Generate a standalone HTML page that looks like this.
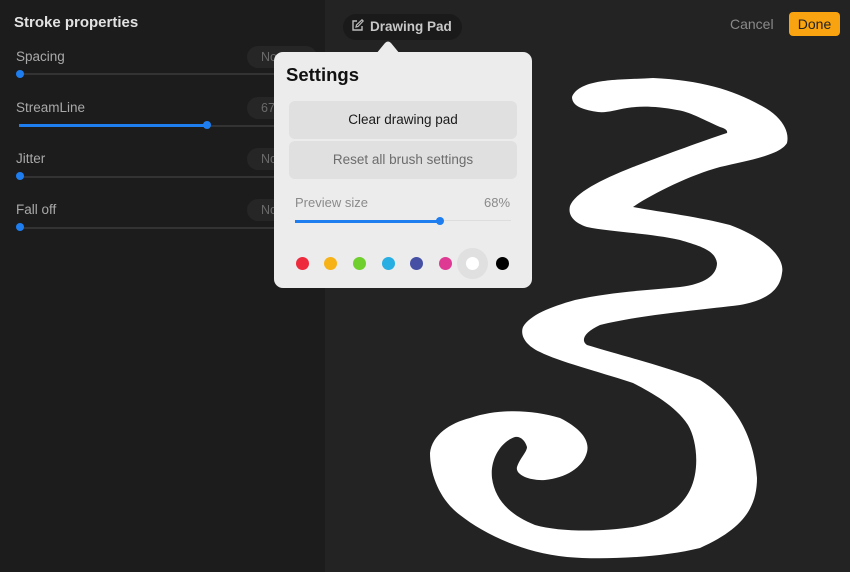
<!DOCTYPE html>
<html><head><meta charset="utf-8"><style>
*{margin:0;padding:0;box-sizing:border-box}
body{width:850px;height:572px;overflow:hidden;background:#232323;font-family:"Liberation Sans",sans-serif;position:relative}
.left{position:absolute;left:0;top:0;width:325px;height:572px;background:#1c1c1c}
.t{position:absolute;color:#e6e6e6}
.lab{position:absolute;left:16px;color:#a9a9a9;font-size:13.5px}
.pill{position:absolute;left:247px;width:70px;height:22px;border-radius:11px;background:#262626;color:#6a6a6a;font-size:12.5px;padding:4px 0 0 14px}
.track{position:absolute;left:19px;width:300px;height:2px;background:#333}
.fill{position:absolute;left:19px;height:3px;background:#1e7ef0}
.knob{position:absolute;width:8px;height:8px;border-radius:50%;background:#1e7ef0}
.pop{position:absolute;left:274px;top:52px;width:258px;height:236px;background:#ececec;border-radius:9px}
.btn{position:absolute;left:15px;width:228px;height:38px;border-radius:6px;background:#e0e0e0;text-align:center;font-size:13.5px;padding-top:11px}
.dot{position:absolute;top:205px;width:13px;height:13px;border-radius:50%}
</style></head><body>
<div class="left">
<div class="t" style="left:14px;top:14px;font-size:15px;font-weight:bold;color:#e2e2e2">Stroke properties</div>
<div class="lab" style="top:49px">Spacing</div><div class="pill" style="top:46px">None</div>
<div class="track" style="top:73px"></div><div class="knob" style="left:16px;top:70px"></div>
<div class="lab" style="top:100px">StreamLine</div><div class="pill" style="top:97px">67%</div>
<div class="track" style="top:125px"></div><div class="fill" style="top:124px;width:188px"></div><div class="knob" style="left:203px;top:121px"></div>
<div class="lab" style="top:151px">Jitter</div><div class="pill" style="top:148px">None</div>
<div class="track" style="top:176px"></div><div class="knob" style="left:16px;top:172px"></div>
<div class="lab" style="top:202px">Fall off</div><div class="pill" style="top:199px">None</div>
<div class="track" style="top:227px"></div><div class="knob" style="left:16px;top:223px"></div>
</div>
<svg style="position:absolute;left:0;top:0" width="850" height="572">
<path fill="#fff" d="M572,97 C580,78 620,80 653,78 C700,80 733,90 760,105 C780,115 790,130 787,143 C780,155 750,160 720,167 C690,175 650,195 633,207 C660,212 700,217 730,225 C770,240 785,260 782,273 C780,290 767,300 740,305 C700,310 640,315 600,325 C585,332 580,340 587,345 C620,355 667,367 700,380 C740,405 755,443 757,478 C757,510 740,530 700,548 C660,558 600,560 567,557 C520,552 483,533 460,515 C440,500 430,475 430,453 C432,435 450,423 470,418 C500,408 533,410 560,418 C580,428 590,440 587,452 C583,468 565,478 545,480 C530,481 515,475 517,467 C520,458 527,452 527,447 C525,440 520,436 515,437 C500,442 490,460 492,478 C495,500 510,515 535,525 C560,532 600,532 633,527 C660,522 680,510 690,490 C700,470 697,440 688,425 C675,405 650,392 633,383 C600,372 560,362 540,352 C525,345 520,335 523,327 C530,315 550,307 575,300 C610,292 650,290 680,287 C705,284 717,275 717,263 C715,250 700,246 680,240 C650,233 610,232 587,227 C572,222 568,214 570,206 C575,193 600,180 633,167 C670,153 700,142 727,133 C728,130 724,128 720,127 C700,118 690,112 677,110 C655,106 640,106 627,108 C615,110 607,113 598,112 C585,110 572,107 572,97 Z"/>
</svg>
<div style="position:absolute;left:343px;top:14px;width:119px;height:26px;border-radius:13px;background:#1a1a1a"></div>
<svg style="position:absolute;left:351px;top:19px" width="13" height="13" viewBox="0 0 13 13"><path d="M6,2 H2 V11 H11 V7" fill="none" stroke="#bbb" stroke-width="1.4"/><path d="M5,8 L5.5,6 L11,0.8 L12.2,2 L7,7.5 Z" fill="none" stroke="#bbb" stroke-width="1.2"/></svg>
<div class="t" style="left:370px;top:19px;font-size:13.5px;font-weight:bold;color:#c8c8c8">Drawing Pad</div>
<div class="t" style="left:730px;top:16px;font-size:14px;color:#8a8a8a">Cancel</div>
<div style="position:absolute;left:789px;top:12px;width:51px;height:24px;border-radius:4px;background:#f8a30f;color:#222;font-size:14px;text-align:center;padding-top:4px">Done</div>
<svg style="position:absolute;left:376px;top:40px" width="24" height="14"><path d="M0,14 L9,3 Q12,0 15,3 L24,14 Z" fill="#ececec"/></svg>
<div class="pop">
<div style="position:absolute;left:12px;top:12px;font-size:18.5px;font-weight:bold;color:#111">Settings</div>
<div class="btn" style="top:49px;color:#1a1a1a">Clear drawing pad</div>
<div class="btn" style="top:89px;color:#6c6c6c">Reset all brush settings</div>
<div style="position:absolute;left:21px;top:143px;font-size:13px;color:#8a8a8a">Preview size</div>
<div style="position:absolute;left:210px;top:143px;font-size:13px;color:#8a8a8a">68%</div>
<div style="position:absolute;left:21px;top:168px;width:216px;height:1px;background:#ddd"></div>
<div style="position:absolute;left:21px;top:168px;width:145px;height:3px;background:#1e7ef0"></div>
<div style="position:absolute;left:162px;top:165px;width:8px;height:8px;border-radius:50%;background:#1e7ef0"></div>
<div class="dot" style="left:22px;background:#ee2b3c"></div>
<div class="dot" style="left:50px;background:#f7b218"></div>
<div class="dot" style="left:79px;background:#6fcf2c"></div>
<div class="dot" style="left:108px;background:#27aee2"></div>
<div class="dot" style="left:136px;background:#4550a5"></div>
<div class="dot" style="left:165px;background:#df3a93"></div>
<div style="position:absolute;left:183px;top:196px;width:31px;height:31px;border-radius:50%;background:#e0e0e0"></div>
<div class="dot" style="left:192px;background:#fff"></div>
<div class="dot" style="left:222px;background:#000"></div>
</div>
</body></html>
